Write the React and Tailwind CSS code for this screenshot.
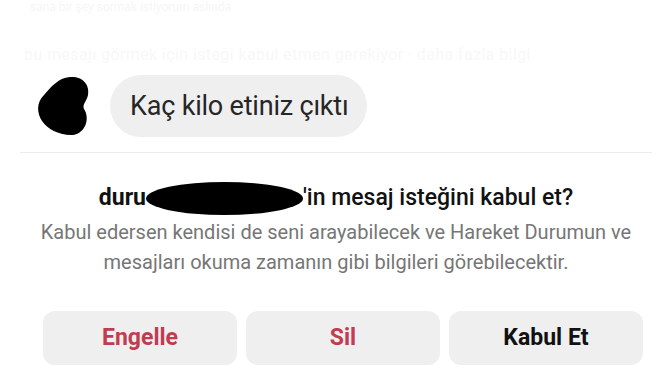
import React from "react";

const Blob = () => (
  <svg width="56" height="60" viewBox="0 0 56 60" className="shrink-0">
    <path
      d="M34 1 C46 0 54 8 52 19 C51 25 46 28 48 33 C54 42 50 57 37 59 C26 60 12 54 6 45 C1 37 0 27 8 19 C15 11 22 2 34 1 Z"
      fill="#000"
    />
  </svg>
);

const App = () => {
  return (
    <div
      className="w-[672px] h-[378px] bg-white overflow-hidden flex flex-col"
      style={{ fontFamily: "Roboto, 'Noto Sans', sans-serif" }}
    >
      {/* faint leftover text from the chat above */}
      <div className="h-[75px]">
        <div className="pl-[30px] pt-[1px] text-[12px] text-[#f6f6f6] leading-none">
          sana bir şey sormak istiyorum aslında
        </div>
        <div className="pl-[24px] mt-[34px] text-[16px] text-[#f8f8f8] leading-none tracking-wide">
          bu mesajı görmek için isteği kabul etmen gerekiyor · daha fazla bilgi
        </div>
      </div>

      <div className="flex items-center h-[62px]">
        <div className="w-[110px] flex justify-start pl-[36px]">
          <Blob />
        </div>
        <div className="h-[62px] w-[257px] rounded-full bg-[#efefef] flex items-center pl-[20px]">
          <span className="text-[27px] text-[#262626] tracking-[-0.2px]">
            Kaç kilo etiniz çıktı
          </span>
        </div>
      </div>

      <div className="mt-[15px] mx-[20px] h-px bg-[#ececec]" />

      <div className="mt-[28px] flex items-center justify-center h-[34px] text-[23px] text-[#111]">
        <span className="font-bold">duru</span>
        <span className="w-[157px] h-[33px] bg-black rounded-[50%]" />
        <span className="font-medium">'in mesaj isteğini kabul et?</span>
      </div>

      <div className="mt-[2px] text-center text-[20px] leading-[30px] text-[#767676]">
        Kabul edersen kendisi de seni arayabilecek ve Hareket Durumun ve
        <br />
        mesajları okuma zamanın gibi bilgileri görebilecektir.
      </div>

      <div className="mt-[34px] flex gap-[9px] pl-[43px]">
        <button className="w-[194px] h-[54px] rounded-[12px] bg-[#efefef] text-[23px] font-bold text-[#c13c50]">
          Engelle
        </button>
        <button className="w-[194px] h-[54px] rounded-[12px] bg-[#efefef] text-[23px] font-bold text-[#c13c50]">
          Sil
        </button>
        <button className="w-[194px] h-[54px] rounded-[12px] bg-[#efefef] text-[23px] font-bold text-[#111]">
          Kabul Et
        </button>
      </div>
    </div>
  );
};

export default App;
